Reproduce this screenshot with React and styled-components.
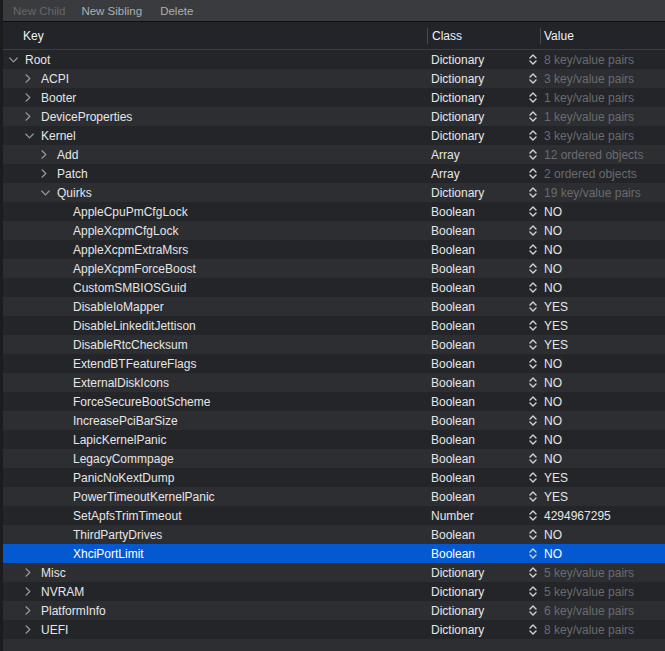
import React from "react";
import styled, { createGlobalStyle } from "styled-components";

const GlobalStyle = createGlobalStyle`
  html, body {
    margin: 0;
    padding: 0;
    background: #2c2e32;
  }
  body {
    font-family: "Liberation Sans", Arial, Helvetica, sans-serif;
    -webkit-font-smoothing: antialiased;
  }
`;

const rows = [
  { key: "Root", level: 0, open: true, cls: "Dictionary", value: "8 key/value pairs", dim: true },
  { key: "ACPI", level: 1, open: false, cls: "Dictionary", value: "3 key/value pairs", dim: true },
  { key: "Booter", level: 1, open: false, cls: "Dictionary", value: "1 key/value pairs", dim: true },
  { key: "DeviceProperties", level: 1, open: false, cls: "Dictionary", value: "1 key/value pairs", dim: true },
  { key: "Kernel", level: 1, open: true, cls: "Dictionary", value: "3 key/value pairs", dim: true },
  { key: "Add", level: 2, open: false, cls: "Array", value: "12 ordered objects", dim: true },
  { key: "Patch", level: 2, open: false, cls: "Array", value: "2 ordered objects", dim: true },
  { key: "Quirks", level: 2, open: true, cls: "Dictionary", value: "19 key/value pairs", dim: true },
  { key: "AppleCpuPmCfgLock", level: 3, cls: "Boolean", value: "NO" },
  { key: "AppleXcpmCfgLock", level: 3, cls: "Boolean", value: "NO" },
  { key: "AppleXcpmExtraMsrs", level: 3, cls: "Boolean", value: "NO" },
  { key: "AppleXcpmForceBoost", level: 3, cls: "Boolean", value: "NO" },
  { key: "CustomSMBIOSGuid", level: 3, cls: "Boolean", value: "NO" },
  { key: "DisableIoMapper", level: 3, cls: "Boolean", value: "YES" },
  { key: "DisableLinkeditJettison", level: 3, cls: "Boolean", value: "YES" },
  { key: "DisableRtcChecksum", level: 3, cls: "Boolean", value: "YES" },
  { key: "ExtendBTFeatureFlags", level: 3, cls: "Boolean", value: "NO" },
  { key: "ExternalDiskIcons", level: 3, cls: "Boolean", value: "NO" },
  { key: "ForceSecureBootScheme", level: 3, cls: "Boolean", value: "NO" },
  { key: "IncreasePciBarSize", level: 3, cls: "Boolean", value: "NO" },
  { key: "LapicKernelPanic", level: 3, cls: "Boolean", value: "NO" },
  { key: "LegacyCommpage", level: 3, cls: "Boolean", value: "NO" },
  { key: "PanicNoKextDump", level: 3, cls: "Boolean", value: "YES" },
  { key: "PowerTimeoutKernelPanic", level: 3, cls: "Boolean", value: "YES" },
  { key: "SetApfsTrimTimeout", level: 3, cls: "Number", value: "4294967295" },
  { key: "ThirdPartyDrives", level: 3, cls: "Boolean", value: "NO" },
  { key: "XhciPortLimit", level: 3, cls: "Boolean", value: "NO", selected: true },
  { key: "Misc", level: 1, open: false, cls: "Dictionary", value: "5 key/value pairs", dim: true },
  { key: "NVRAM", level: 1, open: false, cls: "Dictionary", value: "5 key/value pairs", dim: true },
  { key: "PlatformInfo", level: 1, open: false, cls: "Dictionary", value: "6 key/value pairs", dim: true },
  { key: "UEFI", level: 1, open: false, cls: "Dictionary", value: "8 key/value pairs", dim: true },
];

const Window = styled.div`
  height: 651px;
  border-left: 3px solid #1b1c1e;
  background: #2c2e32;
  display: flex;
  flex-direction: column;
  overflow: hidden;
  font-size: 12px;
  color: #e6e6e7;
`;

const Toolbar = styled.div`
  height: 21px;
  flex-shrink: 0;
  background: #393b3e;
  border-bottom: 1px solid #0e0f10;
  display: flex;
  align-items: center;
  gap: 16px;
  padding-left: 10px;
  font-size: 11.5px;
`;

const ToolButton = styled.span`
  color: ${({ disabled }) => (disabled ? "#66686b" : "#aeafb1")};
  margin-left: ${({ $shift }) => $shift || 0}px;
  cursor: default;
`;

const Grid = styled.div`
  display: grid;
  grid-template-columns: 424px 113px 1fr;
  flex-shrink: 0;
`;

const Header = styled(Grid)`
  height: 27px;
  background: #222429;
  border-bottom: 1px solid #3a3c40;
  align-items: center;
  color: #f2f2f2;
`;

const HeadCell = styled.div`
  height: 16px;
  display: flex;
  align-items: center;
  padding-left: ${({ $pad }) => $pad}px;
  border-left: ${({ $sep }) => ($sep ? "1px solid #4a4c50" : "none")};
`;

const Row = styled(Grid)`
  height: 19px;
  align-items: center;
  background: ${({ $selected, $odd }) =>
    $selected ? "#0459d0" : $odd ? "#2c2e32" : "#232529"};
  color: ${({ $selected }) => ($selected ? "#ffffff" : "#e6e6e7")};
  white-space: nowrap;
`;

const KeyCell = styled.div`
  display: flex;
  align-items: center;
  padding-left: ${({ $level }) => 5 + $level * 16}px;
`;

const Toggle = styled.span`
  width: 16px;
  display: inline-flex;
  align-items: center;
  justify-content: flex-start;
  padding-left: 1px;
  color: #96979a;
`;

const ClassCell = styled.div`
  display: flex;
  align-items: center;
  justify-content: space-between;
  padding: 0 3px 0 4px;
`;

const ValueCell = styled.div`
  padding-left: 4px;
  color: ${({ $dim, $selected }) => ($selected ? "#ffffff" : $dim ? "#6a6b6f" : "#e6e6e7")};
`;

const Filler = styled.div`
  flex: 1;
  background: #2c2e32;
`;

const Chevron = ({ open }) =>
  open ? (
    <svg width="9" height="6" viewBox="0 0 9 6" fill="none">
      <path d="M0.8 1 L4.5 4.8 L8.2 1" stroke="currentColor" strokeWidth="1.2" strokeLinecap="round" strokeLinejoin="round" />
    </svg>
  ) : (
    <svg width="6" height="9" viewBox="0 0 6 9" fill="none">
      <path d="M1 0.8 L4.8 4.5 L1 8.2" stroke="currentColor" strokeWidth="1.2" strokeLinecap="round" strokeLinejoin="round" />
    </svg>
  );

const Stepper = () => (
  <svg width="8" height="11" viewBox="0 0 8 11" fill="none">
    <path d="M1 4 L4 1 L7 4 M1 7 L4 10 L7 7" stroke="#d2d3d5" strokeWidth="1.4" strokeLinecap="round" strokeLinejoin="round" />
  </svg>
);

export default function App() {
  return (
    <>
      <GlobalStyle />
      <Window>
        <Toolbar>
          <ToolButton disabled>New Child</ToolButton>
          <ToolButton>New Sibling</ToolButton>
          <ToolButton $shift={2}>Delete</ToolButton>
        </Toolbar>
        <Header>
          <HeadCell $pad={20}>Key</HeadCell>
          <HeadCell $pad={4} $sep>Class</HeadCell>
          <HeadCell $pad={3} $sep>Value</HeadCell>
        </Header>
        {rows.map((r, i) => (
          <Row key={r.key} $odd={i % 2 === 1} $selected={r.selected}>
            <KeyCell $level={r.level}>
              <Toggle>{r.open !== undefined && <Chevron open={r.open} />}</Toggle>
              {r.key}
            </KeyCell>
            <ClassCell>
              {r.cls}
              <Stepper />
            </ClassCell>
            <ValueCell $dim={r.dim} $selected={r.selected}>
              {r.value}
            </ValueCell>
          </Row>
        ))}
        <Filler />
      </Window>
    </>
  );
}
